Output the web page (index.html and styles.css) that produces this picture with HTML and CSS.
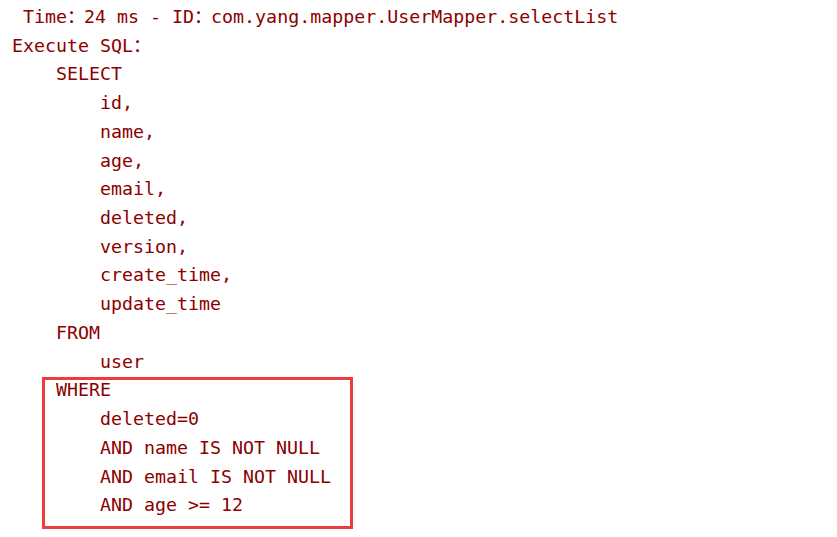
FILE: index.html
```html
<!DOCTYPE html>
<html>
<head>
<meta charset="utf-8">
<link rel="stylesheet" href="styles.css">
</head>
<body>
<div class="log">
<div class="line"> Time<span class="cjk">：</span>24 ms - ID<span class="cjk">：</span>com.yang.mapper.UserMapper.selectList</div>
<div class="line">Execute SQL<span class="cjk">：</span></div>
<div class="line i1">SELECT</div>
<div class="line i2">id,</div>
<div class="line i2">name,</div>
<div class="line i2">age,</div>
<div class="line i2">email,</div>
<div class="line i2">deleted,</div>
<div class="line i2">version,</div>
<div class="line i2">create_time,</div>
<div class="line i2">update_time</div>
<div class="line i1">FROM</div>
<div class="line i2">user</div>
<div class="where">
<div class="line i1">WHERE</div>
<div class="line i2">deleted=0</div>
<div class="line i2">AND name IS NOT NULL</div>
<div class="line i2">AND email IS NOT NULL</div>
<div class="line i2">AND age &gt;= 12</div>
<span class="highlight"></span>
</div>
</div>
</body>
</html>
```
FILE: styles.css
```css
html, body {
  margin: 0;
  padding: 0;
  background: #ffffff;
}
body {
  min-height: 537px;
}
.log {
  padding: 3px 0 0 12px;
  font-family: "DejaVu Sans Mono", "Liberation Mono", "Noto Sans CJK SC", monospace;
  font-size: 18.3px;
  line-height: 28.72px;
  color: #8b0000;
}
.line {
  white-space: pre;
}
.cjk {
  font-family: "Noto Sans CJK SC", sans-serif;
  display: inline-block;
  width: 17px;
  line-height: 1;
}
.i1 { padding-left: 44px; }
.i2 { padding-left: 88px; }
.where {
  position: relative;
  padding-bottom: 12px;
}
.highlight {
  position: absolute;
  left: 30px;
  top: 1px;
  width: 305px;
  height: 146px;
  border: 3px solid #ef3b3b;
}
```
